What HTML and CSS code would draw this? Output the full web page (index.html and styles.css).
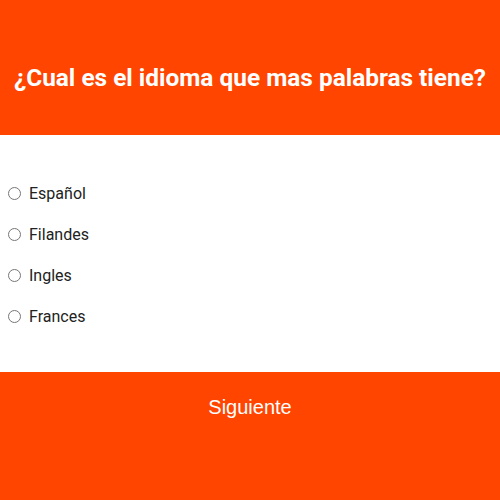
FILE: index.html
```html
<!DOCTYPE html>
<html lang="es">
<head>
<meta charset="utf-8">
<link rel="stylesheet" href="styles.css">
</head>
<body>
<header class="header">
  <h1 class="title">¿Cual es el idioma que mas palabras tiene?</h1>
</header>
<main class="options">
  <label class="option"><input type="radio" name="q" class="radio"><span>Español</span></label>
  <label class="option"><input type="radio" name="q" class="radio"><span>Filandes</span></label>
  <label class="option"><input type="radio" name="q" class="radio"><span>Ingles</span></label>
  <label class="option"><input type="radio" name="q" class="radio"><span>Frances</span></label>
</main>
<footer class="footer">
  <button class="next">Siguiente</button>
</footer>
</body>
</html>
```
FILE: styles.css
```css
html, body {
  margin: 0;
  padding: 0;
  height: 100%;
}
body {
  display: flex;
  flex-direction: column;
  font-family: Roboto, "Liberation Sans", sans-serif;
  background: #fff;
}
.header {
  background: #ff4500;
  height: 135px;
  display: flex;
  justify-content: center;
  align-items: flex-start;
  padding-top: 64px;
  box-sizing: border-box;
}
.title {
  margin: 0;
  color: #fff;
  font-size: 24.4px;
  line-height: 28px;
  font-weight: 700;
  text-align: center;
}
.options {
  display: flex;
  flex-direction: column;
  gap: 20px;
  padding: 48px 8px 0;
  height: 237px;
  box-sizing: border-box;
}
.option {
  display: flex;
  align-items: center;
  font-size: 16px;
  color: #222;
  line-height: 21px;
}
.radio {
  margin: 0 8px 0 0;
  width: 13px;
  height: 13px;
}
.footer {
  flex: 1;
  background: #ff4500;
  display: flex;
  justify-content: center;
  align-items: flex-start;
}
.next {
  background: transparent;
  border: none;
  color: #fff;
  font-family: "Liberation Sans", Arial, sans-serif;
  font-size: 20px;
  padding: 24px 0 0;
  cursor: pointer;
}
```
